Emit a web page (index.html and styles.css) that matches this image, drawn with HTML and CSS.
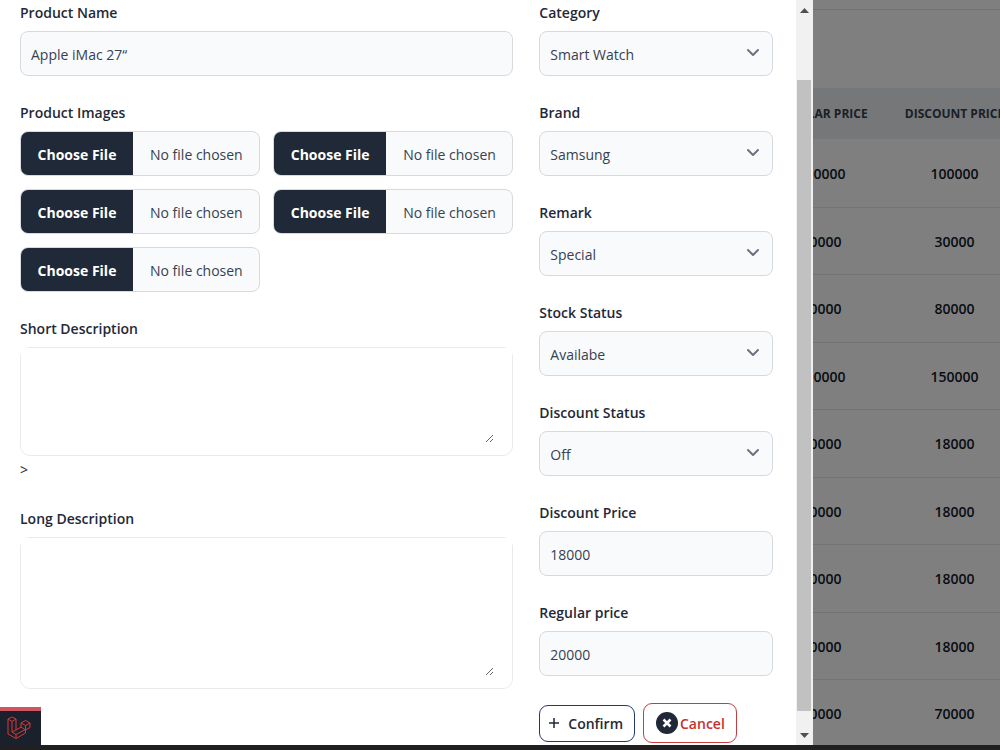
FILE: index.html
```html
<!DOCTYPE html>
<html lang="en">
<head>
<meta charset="UTF-8">
<meta name="viewport" content="width=device-width, initial-scale=1.0">
<title>Update Product</title>
<link rel="stylesheet" href="styles.css">
</head>
<body>

  <main class="page">
    <div class="page-header"></div>
    <table class="products">
      <thead>
        <tr><th>Regular Price</th><th>Discount Price</th></tr>
      </thead>
      <tbody>
        <tr><td>100000</td><td>100000</td></tr>
        <tr><td>40000</td><td>30000</td></tr>
        <tr><td>90000</td><td>80000</td></tr>
        <tr><td>200000</td><td>150000</td></tr>
        <tr><td>20000</td><td>18000</td></tr>
        <tr><td>20000</td><td>18000</td></tr>
        <tr><td>20000</td><td>18000</td></tr>
        <tr><td>20000</td><td>18000</td></tr>
        <tr><td>80000</td><td>70000</td></tr>
      </tbody>
    </table>
  </main>

  <div class="backdrop"></div>

  <aside class="drawer">
    <form class="product-form" action="#" method="post">
      <div class="column">
        <div class="field">
          <label for="name">Product Name</label>
          <input class="control" type="text" id="name" name="name" value="Apple iMac 27“">
        </div>

        <div class="field">
          <label for="image1">Product Images</label>
          <div class="files">
            <input class="file" type="file" id="image1" name="image1">
            <input class="file" type="file" name="image2" aria-label="Product image 2">
            <input class="file" type="file" name="image3" aria-label="Product image 3">
            <input class="file" type="file" name="image4" aria-label="Product image 4">
            <input class="file" type="file" name="image5" aria-label="Product image 5">
          </div>
        </div>

        <div class="field field-short">
          <label for="shortDescription">Short Description</label>
          <div class="editor">
            <div class="editor-body">
              <textarea id="shortDescription" name="short_des" rows="4"></textarea>
            </div>
          </div>
          <span class="stray">&gt;</span>
        </div>

        <div class="field">
          <label for="longDescription">Long Description</label>
          <div class="editor">
            <div class="editor-body">
              <textarea class="tall" id="longDescription" name="long_des" rows="6"></textarea>
            </div>
          </div>
        </div>
      </div>

      <div class="column">
        <div class="field">
          <label for="category">Category</label>
          <div class="select">
            <select class="control" id="category" name="category"><option>Smart Watch</option></select>
            <svg viewBox="0 0 14 10"><path d="M2 2l5 5 5-5"/></svg>
          </div>
        </div>
        <div class="field">
          <label for="brand">Brand</label>
          <div class="select">
            <select class="control" id="brand" name="brand"><option>Samsung</option></select>
            <svg viewBox="0 0 14 10"><path d="M2 2l5 5 5-5"/></svg>
          </div>
        </div>
        <div class="field">
          <label for="remark">Remark</label>
          <div class="select">
            <select class="control" id="remark" name="remark"><option>Special</option></select>
            <svg viewBox="0 0 14 10"><path d="M2 2l5 5 5-5"/></svg>
          </div>
        </div>
        <div class="field">
          <label for="stock">Stock Status</label>
          <div class="select">
            <select class="control" id="stock" name="stock"><option>Availabe</option></select>
            <svg viewBox="0 0 14 10"><path d="M2 2l5 5 5-5"/></svg>
          </div>
        </div>
        <div class="field">
          <label for="discount">Discount Status</label>
          <div class="select">
            <select class="control" id="discount" name="discount"><option>Off</option></select>
            <svg viewBox="0 0 14 10"><path d="M2 2l5 5 5-5"/></svg>
          </div>
        </div>
        <div class="field">
          <label for="discountPrice">Discount Price</label>
          <input class="control" type="text" id="discountPrice" name="discount_price" value="18000">
        </div>
        <div class="field">
          <label for="regularPrice">Regular price</label>
          <input class="control" type="text" id="regularPrice" name="price" value="20000">
        </div>
        <div class="actions">
          <button class="btn confirm" type="submit">
            <svg viewBox="0 0 12 12"><path d="M6 1v10M1 6h10"/></svg>
            Confirm
          </button>
          <button class="btn cancel" type="button">
            <svg viewBox="0 0 22 22"><circle cx="11" cy="11" r="11"/><path d="M7.500 7.500l7 7M14.500 7.500l-7 7"/></svg>
            Cancel
          </button>
        </div>
      </div>
    </form>

    <div class="scrollbar">
      <svg class="arrow" viewBox="0 0 9 5"><path d="M0 5l4.500-5L9 5z"/></svg>
      <div class="thumb"></div>
      <svg class="arrow" viewBox="0 0 9 5"><path d="M0 0l4.500 5L9 0z"/></svg>
    </div>
  </aside>

  <!-- debugbar toggle -->
  <a class="debugbar" href="#" aria-label="Debugbar">
    <svg viewBox="0 0 24 24">
      <path d="M1 3l4-2 4 2v11l5-3V7l4.500-2.500L23 7v4.500L18.500 14v3L9 22.500 1 18z"/>
      <path d="M1 3l4 2.500L9 3M5 5.500V16l4 2.500 9.500-5M9 18.500v4M14 7l4.500 2.500L23 7M18.500 9.500V14M9 14l-4 2M14 11l4.500 3"/>
    </svg>
  </a>
  <div class="taskbar"></div>

</body>
</html>
```
FILE: styles.css
```css
* {
  box-sizing: border-box;
}

body {
  margin: 0;
  font-family: 'Open Sans', 'Noto Sans', sans-serif;
  font-size: 14px;
  line-height: 20px;
  color: #1f2937;
  background-color: #fff;
}

/* Products page, behind the drawer */
.page {
  height: 100vh;
  overflow: hidden;
  padding-left: 75.5%;
}

.page-header {
  height: 88px;
  padding-top: 9px;
}

.page-header::before {
  content: '';
  display: block;
  border-top: 1px solid #e5e7eb;
}

.products {
  width: 266px;
  table-layout: fixed;
  border-collapse: collapse;
  text-align: center;
}

.products th {
  height: 51px;
  padding: 0;
  font-size: 12px;
  font-weight: 700;
  text-transform: uppercase;
  white-space: nowrap;
  color: #374151;
  background-color: #eceef2;
}

.products td {
  height: 68px;
  padding: 2px 0 0;
  font-weight: 600;
  color: #111827;
  border-bottom: 1px solid #e5e7eb;
}

.products tr:nth-child(even) td {
  height: 67px;
}

.backdrop {
  position: fixed;
  inset: 0;
  background-color: rgba(0, 0, 0, 0.5);
}

/* Drawer */
.drawer {
  position: fixed;
  top: 0;
  bottom: 5px;
  left: 0;
  width: 81.3%;
  display: flex;
  overflow: hidden;
  background-color: #fff;
}

.product-form {
  flex: 1;
  display: grid;
  grid-template-columns: minmax(0, 494fr) minmax(0, 234fr);
  gap: 26px;
  padding: 3px 23px 0 20px;
}

.column {
  display: flex;
  flex-direction: column;
  gap: 27px;
}

.field label {
  display: block;
  margin-bottom: 8px;
  font-weight: 600;
}

.control {
  display: block;
  width: 100%;
  height: 45px;
  padding: 1px 10px 0;
  border: 1px solid #d6d9de;
  border-radius: 8px;
  font-family: inherit;
  font-size: 14px;
  color: #374151;
  background-color: #f9fafb;
}

.select {
  position: relative;
}

.select select {
  appearance: none;
}

.select svg {
  position: absolute;
  top: 17px;
  right: 13px;
  width: 14px;
  height: 10px;
  fill: none;
  stroke: #6b7280;
  stroke-width: 2;
  stroke-linecap: round;
  stroke-linejoin: round;
  pointer-events: none;
}

.files {
  display: grid;
  grid-template-columns: 1fr 1fr;
  gap: 13px;
}

.file {
  width: 100%;
  min-width: 0;
  height: 45px;
  border: 1px solid #d6d9de;
  border-radius: 8px;
  overflow: hidden;
  font-family: inherit;
  font-size: 14px;
  line-height: 45px;
  color: #374151;
  background-color: #f9fafb;
}

.file::file-selector-button {
  width: 112px;
  height: 43px;
  margin: 0 17px 0 0;
  padding: 2px 0 0;
  border: 0;
  font-family: inherit;
  font-size: 14px;
  font-weight: 700;
  color: #fff;
  background-color: #1f2937;
}

.editor {
  border: 1px solid #e8eaed;
  border-radius: 10px;
}

/* square top corners cover the rounded border corners */
.editor-body {
  padding: 12px 18px;
  border-radius: 0 0 10px 10px;
  background-color: #fff;
}

.editor textarea {
  display: block;
  width: 100%;
  height: 83px;
  padding: 0;
  border: 0;
  font-family: inherit;
  font-size: 14px;
}

.editor textarea.tall {
  height: 126px;
}

.stray {
  display: block;
  padding-top: 4px;
}

.field-short {
  margin-bottom: 2px;
}

.actions {
  display: flex;
  align-items: center;
  gap: 8px;
}

.btn {
  display: flex;
  align-items: center;
  border-radius: 9px;
  font-family: inherit;
  font-size: 14px;
  font-weight: 600;
  background-color: #fff;
  cursor: pointer;
}

.confirm {
  height: 37px;
  gap: 8px;
  padding: 0 11px 0 8px;
  border: 1px solid #1e3a6e;
  color: #1f2937;
}

.confirm svg {
  width: 12px;
  height: 12px;
  stroke: #1f2937;
  stroke-width: 1.5;
}

.cancel {
  height: 40px;
  gap: 2px;
  padding: 0 11px 0 12px;
  border: 1px solid #c53d41;
  color: #c53030;
}

.cancel svg {
  width: 22px;
  height: 22px;
  fill: #1f2937;
  stroke: none;
}

.cancel path {
  stroke: #fff;
  stroke-width: 2.5;
}

.scrollbar {
  width: 17px;
  display: flex;
  flex-direction: column;
  align-items: center;
  padding: 8px 2px 7px 1px;
  background-color: #f1f1f1;
}

.arrow {
  width: 9px;
  height: 5px;
  fill: #505050;
}

.thumb {
  flex: 1;
  width: 100%;
  margin: 67px 0 22px;
  background-color: #c1c1c1;
}

.debugbar {
  position: fixed;
  left: 0;
  bottom: 5px;
  width: 41px;
  height: 38px;
  padding: 5px 0 0 7px;
  border-top: 4px solid #cf5461;
  background-color: #1a202c;
}

.debugbar svg {
  width: 24px;
  height: 24px;
  fill: none;
  stroke: #d43a36;
  stroke-width: 1;
  stroke-linejoin: round;
}

.taskbar {
  position: fixed;
  left: 0;
  right: 0;
  bottom: 0;
  height: 5px;
  background-color: #202020;
}
```
